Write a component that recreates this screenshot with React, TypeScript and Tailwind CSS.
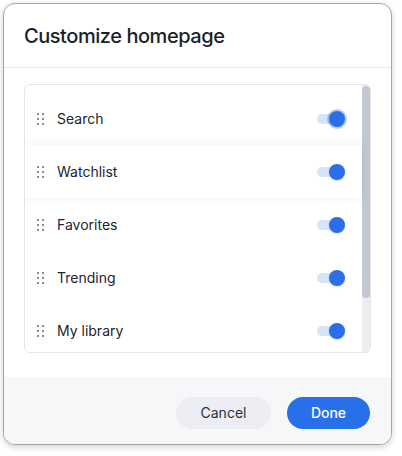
import React from 'react';

const items = [
  { label: 'Search', focused: true },
  { label: 'Watchlist', raised: true },
  { label: 'Favorites' },
  { label: 'Trending' },
  { label: 'My library' },
];

function DragHandle() {
  return (
    <div className="grid grid-cols-2 gap-x-[3px] gap-y-[3px] w-[7px]">
      {Array.from({ length: 6 }, (_, i) => (
        <span key={i} className="block w-[2px] h-[2px] bg-[#858b96]" />
      ))}
    </div>
  );
}

function Toggle({ focused }: { focused?: boolean }) {
  return (
    <div className="relative w-7 h-[10px] rounded-full bg-[#d5e3fb]">
      <span
        className={
          focused
            ? 'absolute right-0 top-1/2 -translate-y-1/2 w-4 h-4 rounded-full bg-[#2a6fe9] shadow-[0_0_0_2px_rgba(42,111,233,0.35)]'
            : 'absolute right-0 top-1/2 -translate-y-1/2 w-4 h-4 rounded-full bg-[#2a6fe9] shadow-[0_1px_2px_rgba(0,0,0,0.15)]'
        }
      />
    </div>
  );
}

export default function App() {
  return (
    <div
      className="w-[402px] h-[456px] bg-white pt-[3px] pl-[3px]"
      style={{ fontFamily: 'Inter, "Noto Sans", sans-serif' }}
    >
      <div className="w-[389px] h-[442px] flex flex-col overflow-hidden rounded-xl border border-[#a6a6a6] bg-white shadow-[0_2px_6px_rgba(0,0,0,0.18)]">
        <div className="h-16 shrink-0 flex items-center px-5 border-b border-[#e6e8ec]">
          <h2 className="text-[20px] font-medium text-[#1b1f2a] tracking-[-0.45px]">Customize homepage</h2>
        </div>

        <div className="flex-1 min-h-0 px-5 pt-4 pb-6">
          <div className="h-full flex overflow-hidden rounded-md border border-[#e3e5ea]">
            <div className="flex-1 min-w-0 pt-[7px]">
              {items.map((item) => (
                <div
                  key={item.label}
                  className={
                    item.raised
                      ? 'relative z-10 h-[53px] flex items-center gap-[13px] pl-3 pr-[17px] bg-white shadow-[0_0_10px_rgba(0,0,0,0.07)]'
                      : 'relative h-[53px] flex items-center gap-[13px] pl-3 pr-[17px] bg-white'
                  }
                >
                  <DragHandle />
                  <span className="flex-1 text-sm text-[#22252e]">{item.label}</span>
                  <Toggle focused={item.focused} />
                </div>
              ))}
            </div>
            <div className="w-2 shrink-0 bg-[#eceef2] pt-px">
              <div className="h-[212px] rounded-full bg-[#c3c8d0]" />
            </div>
          </div>
        </div>

        <div className="h-[67px] shrink-0 flex items-center justify-end gap-4 pr-[21px] pt-1 bg-[#f6f7f9]">
          <button className="w-[95px] h-8 rounded-full bg-[#eceef3] text-sm text-[#2c2f38]">Cancel</button>
          <button className="w-[83px] h-8 rounded-full bg-[#2870ea] text-sm font-medium text-white">Done</button>
        </div>
      </div>
    </div>
  );
}
